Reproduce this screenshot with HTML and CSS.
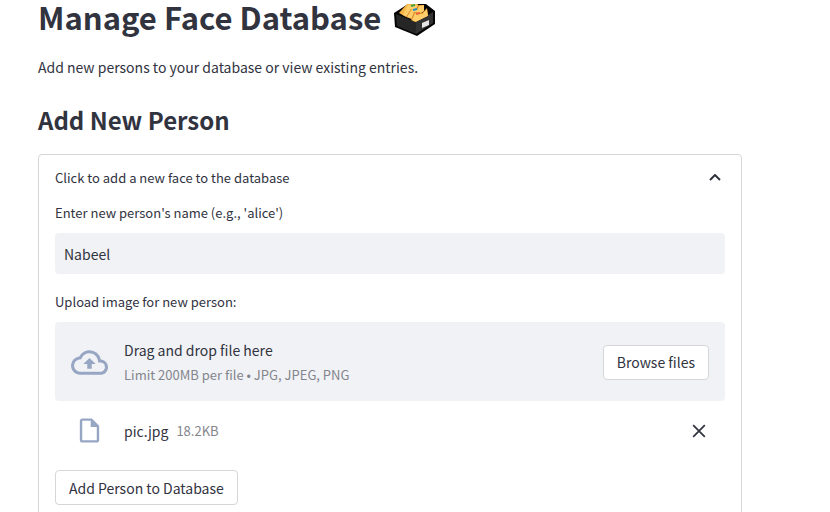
FILE: index.html
```html
<!DOCTYPE html>
<html lang="en">
<head>
<meta charset="utf-8">
<title>Manage Face Database</title>
<link rel="stylesheet" href="styles.css">
</head>
<body>
<main class="page">
  <h1 class="title">Manage Face Database
    <svg class="box" viewBox="0 0 42 36" aria-hidden="true">
      <path fill="#050505" d="M0 13 14 4h18l9 7v13L23 36 1 27z"/>
      <path fill="#262626" d="m2 14 20 8v12L3 26z"/>
      <path fill="#333" d="m22 22 17-10v11L22 34z"/>
      <path fill="#f5b544" d="M5 13 13 4h11l-2 7-10 6z"/>
      <path fill="#ffce6b" d="m9 15 5-10h11l-2 7-9 5z"/>
      <path fill="#d88924" d="m12 17 5-8 5 0 2-4h6v6l-12 8z"/>
      <path fill="#ffce6b" d="m13 17 5-8 5 1 2-4 5-1v6l-12 8z"/>
      <path fill="#d88924" d="m17 20 3-8 8 1 5-5 1 8-13 6z"/>
      <path fill="#ffce6b" d="m18 20 3-7 7 1 5-5 1 7-12 6z"/>
      <path fill="none" stroke="#43a047" stroke-width="2" d="m17 6 4-1"/>
      <path fill="none" stroke="#258bc1" stroke-width="2" d="m19 10 4-1"/>
      <path fill="none" stroke="#ef6337" stroke-width="2" d="m22 14 4-1"/>
      <path fill="#333" d="m22 22 12-6 5-4v6l-17 9z"/>
      <path fill="#e6e6e6" d="m28 23 7-3v5l-7 3z"/>
    </svg>
  </h1>
  <p class="intro">Add new persons to your database or view existing entries.</p>
  <h2 class="subtitle">Add New Person</h2>
  <details class="expander" open>
    <summary class="summary"><span>Click to add a new face to the database</span>
      <svg class="chevron" viewBox="0 0 12 8" aria-hidden="true"><path d="m1 6 5-5 5 5"/></svg>
    </summary>
    <form class="form">
      <label class="label" for="name">Enter new person's name (e.g., 'alice')</label>
      <input class="input" id="name" type="text" value="Nabeel">
      <div class="label upload-label">Upload image for new person:</div>
      <section class="dropzone">
        <svg class="cloud" viewBox="0 0 24 24" aria-hidden="true"><path d="M19.35 10.04A7.49 7.49 0 0 0 12 4C9.11 4 6.6 5.64 5.35 8.04A5.994 5.994 0 0 0 0 14c0 3.31 2.69 6 6 6h13c2.76 0 5-2.24 5-5 0-2.64-2.05-4.78-4.65-4.96zM19 18H6c-2.21 0-4-1.79-4-4 0-2.05 1.53-3.76 3.56-3.97l1.07-.11.5-.95A5.469 5.469 0 0 1 12 6c2.62 0 4.88 1.86 5.39 4.43l.3 1.5 1.53.11A2.98 2.98 0 0 1 22 15c0 1.65-1.35 3-3 3zM8 13h2.55v3h2.9v-3H16l-4-4z"/></svg>
        <div class="drop-text"><span>Drag and drop file here</span><small class="muted">Limit 200MB per file • JPG, JPEG, PNG</small></div>
        <button class="button" type="button">Browse files</button>
      </section>
      <div class="file">
        <svg class="doc" viewBox="0 0 24 24" aria-hidden="true"><path d="M14 2H6c-1.1 0-1.99.9-1.99 2L4 20c0 1.1.89 2 1.99 2H18c1.1 0 2-.9 2-2V8l-6-6zM6 20V4h7v5h5v11H6z"/></svg>
        <span class="file-name">pic.jpg</span><small class="muted">18.2KB</small>
        <button class="remove" type="button" aria-label="Remove file"><svg viewBox="0 0 12 12" aria-hidden="true"><path d="m1 1 10 10M11 1 1 11"/></svg></button>
      </div>
      <button class="button" type="button">Add Person to Database</button>
    </form>
  </details>
</main>
</body>
</html>
```
FILE: styles.css
```css
* { box-sizing: border-box; }
body { margin: 0; overflow: hidden; background: #fff; color: #31333f; font: 14px/24px "Noto Sans CJK JP", "Noto Sans", sans-serif; }
.page { padding: 0 88px 0 38px; }
h1, h2, p { margin: 0; }
.title { display: flex; align-items: flex-start; gap: 13px; font-size: 31px; line-height: 34px; font-weight: 600; }
.box { width: 42px; height: 36px; }
.intro { margin-top: 19px; }
.subtitle { margin-top: 25px; font-size: 24px; line-height: 32px; font-weight: 600; }
.expander { margin-top: 18px; border: 1px solid #d6d6d9; border-radius: 4px; }
.summary { display: flex; align-items: center; justify-content: space-between; padding: 11px 20px 0 16px; font-size: 13px; list-style: none; }
.chevron { width: 12px; height: 8px; fill: none; stroke: #31333f; stroke-width: 2; }
.form { padding: 13px 16px 24px; }
.label { display: block; font-size: 13px; line-height: 20px; margin-bottom: 10px; }
.input { display: block; width: 100%; height: 41px; padding: 0 9px; border: 0; border-radius: 4px; background: #f0f2f6; color: inherit; font: inherit; }
.upload-label { margin-top: 18px; }
.dropzone { display: flex; align-items: center; padding: 16px 16px 15px; background: #f0f2f6; border-radius: 4px; }
.cloud { width: 37px; height: 37px; margin-right: 16px; fill: #97a6c3; }
.drop-text { display: flex; flex: 1; flex-direction: column; gap: 2px; }
.muted { font-size: 13px; line-height: 22px; color: #84858c; }
.button { height: 35px; padding: 0 13px; border: 1px solid #d6d6d9; border-radius: 4px; background: #fff; color: inherit; font: inherit; }
.file { display: flex; align-items: center; padding: 15px 19px 25px 20px; }
.doc { width: 29px; height: 29px; margin-right: 20px; fill: #97a6c3; }
.file-name { margin-right: 8px; }
.remove { display: flex; margin-left: auto; padding: 0; border: 0; background: none; }
.remove svg { width: 14px; height: 14px; stroke: #31333f; stroke-width: 1.5; }
```
